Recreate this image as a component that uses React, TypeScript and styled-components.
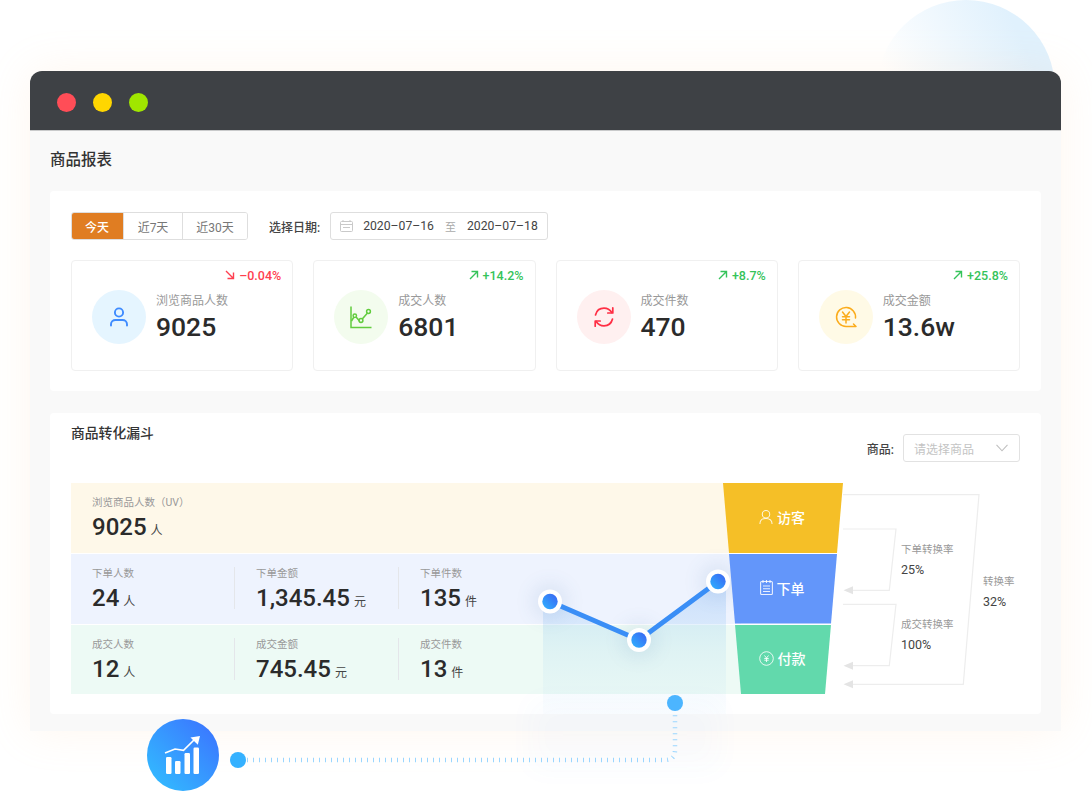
import React from 'react';
import styled, { createGlobalStyle } from 'styled-components';

const GlobalStyle = createGlobalStyle`
  html, body {
    margin: 0;
    padding: 0;
    background: #fff;
  }
  * {
    box-sizing: border-box;
  }
`;

const Page = styled.div`
  position: relative;
  width: 1092px;
  height: 792px;
  overflow: hidden;
  padding: 71px 31px 0 30px;
  background: #fff;
  font-family: Roboto, 'Noto Sans CJK SC', sans-serif;
  color: #2b2b2b;
`;

const DecorCircle = styled.div`
  position: absolute;
  left: 877px;
  top: 0;
  width: 178px;
  height: 178px;
  border-radius: 50%;
  background: linear-gradient(65deg, rgba(224, 241, 254, 0) 22%, #e0f1fd 80%);
`;

const Window = styled.div`
  position: relative;
  height: 660px;
  background: #f9f9f9;
  border-radius: 12px 12px 0 0;
  box-shadow: 0 0 44px rgba(255, 196, 150, 0.16);
`;

const TitleBar = styled.div`
  display: flex;
  align-items: center;
  gap: 17px;
  height: 60px;
  padding: 3px 0 0 27px;
  background: #3e4145;
  border-radius: 12px 12px 0 0;
  border-bottom: 1px solid #c9cacb;
`;

const Light = styled.span<{ $color: string }>`
  width: 19px;
  height: 19px;
  border-radius: 50%;
  background: ${(p) => p.$color};
`;

const Content = styled.div`
  padding: 0 20px;
`;

const PageTitle = styled.h1`
  margin: 0;
  height: 60px;
  padding-top: 18px;
  font-size: 15.5px;
  line-height: 22px;
  font-weight: 500;
  color: #333;
`;

const Panel = styled.section`
  background: #fff;
  border-radius: 4px;
  padding: 21px;
  height: 200px;
`;

const FunnelPanel = styled(Panel)`
  position: relative;
  margin-top: 22px;
  height: 301px;
  padding-top: 0;
`;

const Toolbar = styled.div`
  display: flex;
  align-items: center;
  height: 28px;
`;

const Segment = styled.div`
  display: flex;
  height: 28px;
  border: 1px solid #dedede;
  border-radius: 3px;
  overflow: hidden;
`;

const SegmentItem = styled.button<{ $active?: boolean; $w: number }>`
  width: ${(p) => p.$w}px;
  margin: ${(p) => (p.$active ? '-1px 0 -1px -1px' : '0')};
  padding: 0;
  border: none;
  border-left: ${(p) => (p.$active ? 'none' : '1px solid #dedede')};
  background: ${(p) => (p.$active ? '#e07d22' : '#fff')};
  color: ${(p) => (p.$active ? '#fff' : '#777')};
  font-family: inherit;
  font-size: 12px;
  font-weight: ${(p) => (p.$active ? 500 : 400)};
`;

const FieldLabel = styled.span`
  margin-left: 21px;
  font-size: 12px;
  font-weight: 500;
  color: #444;
`;

const DatePicker = styled.div`
  display: flex;
  align-items: center;
  width: 218px;
  height: 28px;
  margin-left: 10px;
  padding-left: 9px;
  border: 1px solid #dedede;
  border-radius: 3px;
  font-size: 12.2px;
  color: #444;
  white-space: nowrap;
`;

const DateValue = styled.span``;

const DateSep = styled.span`
  margin: 0 11px;
  font-size: 11px;
  color: #aaa;
`;

const CalendarSvg = styled.svg`
  margin-right: 10px;
`;

const CardGrid = styled.div`
  display: grid;
  grid-template-columns: repeat(4, 1fr);
  gap: 20px;
  margin-top: 20px;
`;

const Card = styled.div`
  height: 111px;
  padding: 6px 11px 0 20px;
  border: 1px solid #f0f0f0;
  border-radius: 4px;
`;

const Trend = styled.div<{ $down?: boolean }>`
  display: flex;
  justify-content: flex-end;
  align-items: center;
  gap: 4px;
  height: 16px;
  font-size: 12.5px;
  font-weight: 500;
  color: ${(p) => (p.$down ? '#ff3f50' : '#35c35a')};
`;

const CardBody = styled.div`
  display: flex;
  align-items: center;
  gap: 10px;
  margin-top: 6px;
`;

const IconCircle = styled.div<{ $bg: string }>`
  display: flex;
  align-items: center;
  justify-content: center;
  width: 54px;
  height: 54px;
  border-radius: 50%;
  background: ${(p) => p.$bg};
`;

const StatText = styled.div`
  display: flex;
  flex-direction: column;
  padding-top: 4px;
`;

const StatLabel = styled.span`
  font-size: 12px;
  line-height: 16px;
  color: #999;
`;

const StatValue = styled.span`
  font-size: 26.5px;
  line-height: 36px;
  font-weight: 500;
  color: #2b2b2b;
`;

const FunnelHead = styled.div`
  display: flex;
  justify-content: space-between;
  height: 70px;
`;

const FunnelTitle = styled.h2`
  margin: 10px 0 0;
  font-size: 13.8px;
  line-height: 20px;
  font-weight: 500;
  color: #333;
`;

const SelectWrap = styled.div`
  display: flex;
  align-items: center;
  gap: 9px;
  height: 28px;
  margin-top: 21px;
  font-size: 12px;
  font-weight: 500;
  color: #444;
`;

const SelectBox = styled.div`
  display: flex;
  align-items: center;
  justify-content: space-between;
  width: 117px;
  height: 28px;
  padding: 0 11px 0 10px;
  border: 1px solid #e2e2e2;
  border-radius: 3px;
  font-weight: 400;
  color: #c4c4c4;
`;

const Rows = styled.div`
  position: relative;
  display: flex;
  flex-direction: column;
  width: 772px;
`;

const Row = styled.div<{ $sep?: boolean }>`
  display: grid;
  grid-template-columns: 652px 120px;
  height: ${(p) => (p.$sep ? 70.5 : 70)}px;
  padding-top: ${(p) => (p.$sep ? 1 : 0)}px;
`;

const RowFill = styled.div<{ $bg: string }>`
  display: flex;
  margin-right: -18px;
  background: ${(p) => p.$bg};
`;

const Cell = styled.div<{ $divider?: boolean }>`
  width: 164px;
  height: 42px;
  margin-top: 13px;
  padding-left: 21px;
  border-right: ${(p) => (p.$divider ? '1px solid #e4e6ea' : 'none')};
`;

const CellLabel = styled.div`
  font-size: 10.5px;
  line-height: 14px;
  color: #999;
`;

const CellValue = styled.div`
  font-size: 24px;
  line-height: 34px;
  font-weight: 500;
  color: #2b2b2b;
  white-space: nowrap;
`;

const Unit = styled.span`
  margin-left: 4px;
  font-size: 12px;
  font-weight: 400;
  color: #444;
`;

const FunnelSegment = styled.div<{ $bg: string; $inset: number }>`
  position: relative;
  z-index: 1;
  display: flex;
  align-items: center;
  justify-content: center;
  gap: 4px;
  padding: 0 2px 2px 0;
  background: ${(p) => p.$bg};
  clip-path: polygon(
    ${(p) => p.$inset}px 0,
    ${(p) => 120 - p.$inset}px 0,
    ${(p) => 114 - p.$inset}px 100%,
    ${(p) => p.$inset + 6}px 100%
  );
  font-size: 14px;
  font-weight: 500;
  color: #fff;
`;

const Rates = styled.div`
  position: absolute;
  left: 793px;
  top: 70px;
  width: 177px;
  height: 215px;
`;

const RateLines = styled.svg`
  position: absolute;
  left: 0;
  top: 0;
`;

const RateItem = styled.div<{ $col: number; $row: number; $offset?: number }>`
  position: relative;
  grid-column: ${(p) => p.$col};
  grid-row: ${(p) => p.$row};
  margin-top: ${(p) => p.$offset ?? 0}px;
`;

const RateGrid = styled.div`
  position: relative;
  display: grid;
  grid-template-columns: 82px 60px;
  grid-template-rows: 75px 75px;
  padding: 59px 0 0 58px;
`;

const RateLabel = styled.div`
  font-size: 10.5px;
  line-height: 16px;
  color: #999;
`;

const RateValue = styled.div`
  margin-top: 3px;
  font-size: 12.5px;
  line-height: 18px;
  color: #444;
`;

const Overlay = styled.svg`
  position: absolute;
  left: 0;
  top: 0;
  pointer-events: none;
`;

const Badge = styled.div`
  position: absolute;
  left: 147px;
  top: 719px;
  display: flex;
  align-items: center;
  justify-content: center;
  width: 72px;
  height: 72px;
  padding-left: 2px;
  border-radius: 50%;
  background: linear-gradient(225deg, #3c6fff 0%, #33b5ff 85%);
`;

const metrics = [
  { label: '浏览商品人数', value: '9025', trend: '–0.04%', down: true, bg: '#e5f5ff', icon: 'user' },
  { label: '成交人数', value: '6801', trend: '+14.2%', bg: '#f3fcee', icon: 'chart' },
  { label: '成交件数', value: '470', trend: '+8.7%', bg: '#fff0f0', icon: 'sync' },
  { label: '成交金额', value: '13.6w', trend: '+25.8%', bg: '#fffae6', icon: 'yen' },
];

const orderCells = [
  { label: '下单人数', value: '24', unit: '人' },
  { label: '下单金额', value: '1,345.45', unit: '元' },
  { label: '下单件数', value: '135', unit: '件' },
];

const dealCells = [
  { label: '成交人数', value: '12', unit: '人' },
  { label: '成交金额', value: '745.45', unit: '元' },
  { label: '成交件数', value: '13', unit: '件' },
];

const points = [
  [550, 601.5],
  [639, 640],
  [718, 581.5],
];

const MetricIcon = ({ name }: { name: string }) => {
  if (name === 'user') {
    return (
      <svg width="20" height="24" viewBox="0 0 20 24" fill="none" stroke="#3e8bff" strokeWidth="1.9" strokeLinecap="round">
        <circle cx="10" cy="7.5" r="4.1" />
        <path d="M2 20.5v-1.2c0-2.6 2-4.3 4.5-4.3h7c2.500 0 4.500 1.700 4.500 4.300v1.200" />
      </svg>
    );
  }
  if (name === 'chart') {
    return (
      <svg width="24" height="24" viewBox="0 0 24 24" fill="none" stroke="#62cc3e" strokeWidth="1.5">
        <path d="M2 1.500V22.500H22.500" />
        <path d="M2.500 16L5.800 10.500L11 16.500L18.500 8" />
        <circle cx="5.800" cy="10.800" r="1.700" fill="#f3fcee" />
        <circle cx="12" cy="15.500" r="1.900" fill="#f3fcee" />
        <circle cx="19.500" cy="6.500" r="1.900" fill="#f3fcee" />
      </svg>
    );
  }
  if (name === 'sync') {
    return (
      <svg width="22" height="22" viewBox="0 0 22 22" fill="none" stroke="#ff2f45" strokeWidth="1.700" strokeLinecap="round" strokeLinejoin="round">
        <path d="M2.500 9C3.500 5 6.800 2.200 11 2.200c3.300 0 6 1.500 7.800 4.300" />
        <path d="M19.800 1.800v5.200h-5" />
        <path d="M19.500 13C18.500 17 15.200 19.800 11 19.800c-3.300 0-6-1.500-7.800-4.300" />
        <path d="M2.200 20.200V15h5" />
      </svg>
    );
  }
  return (
    <svg width="22" height="22" viewBox="0 0 22 22" fill="none" stroke="#fbac1c" strokeWidth="1.500" strokeLinecap="round" strokeLinejoin="round">
      <path d="M20.500 12A9.500 9.500 0 1 0 11 20.500h10l-2.500-2.500" />
      <path d="M7.500 6l3.500 4.500L14.500 6M7.500 10.800h7M7.500 13.800h7M11 10.500V17" />
    </svg>
  );
};

const TrendArrow = ({ down }: { down?: boolean }) => (
  <svg width="10" height="10" viewBox="0 0 10 10" fill="none" stroke="currentColor" strokeWidth="1.400">
    {down ? <path d="M1 1l7.500 7.500M8.500 2.500v6h-6" /> : <path d="M1 9l7.500-7.500M2.500 1.500h6v6" />}
  </svg>
);

const CalendarIcon = () => (
  <CalendarSvg width="13" height="12" viewBox="0 0 13 12" fill="none" stroke="#c9c9c9" strokeWidth="1">
    <rect x="0.500" y="1.500" width="12" height="10" rx="1" />
    <path d="M0.500 4.500h12M3 0v2M10 0v2" />
    <path d="M3 7.500h7" />
  </CalendarSvg>
);

const Chevron = () => (
  <svg width="12" height="8" viewBox="0 0 12 8" fill="none" stroke="#c0c0c0" strokeWidth="1.100">
    <path d="M0.500 0.800L6 6.800L11.500 0.800" />
  </svg>
);

const VisitorIcon = () => (
  <svg width="14" height="16" viewBox="0 0 15 16" fill="none" stroke="rgba(255,255,255,0.85)" strokeWidth="1.100">
    <circle cx="7.500" cy="5" r="4" />
    <path d="M1 15.500c0-3.500 2.500-6 6.500-6s6.500 2.500 6.500 6" />
  </svg>
);

const OrderIcon = () => (
  <svg width="13" height="15" viewBox="0 0 13 15" fill="none" stroke="rgba(255,255,255,0.85)" strokeWidth="1.100">
    <rect x="0.600" y="1.500" width="11.800" height="13" rx="1" />
    <path d="M3 0v3M6.500 0v3M10 0v3M3 6h7M3 8.800h7M3 11.500h7" />
  </svg>
);

const PayIcon = () => (
  <svg width="15" height="15" viewBox="0 0 15 15" fill="none" stroke="rgba(255,255,255,0.85)" strokeWidth="1">
    <circle cx="7.500" cy="7.500" r="6.800" />
    <path d="M5.500 4.500l2 2.500 2-2.500M5.300 7.500h4.400M5.300 9.200h4.400M7.500 7v4" />
  </svg>
);

const BadgeIcon = () => (
  <svg width="40" height="42" viewBox="0 0 40 42" fill="#fff">
    <rect x="2" y="23" width="5.500" height="17" rx="1.200" />
    <rect x="11" y="27" width="5.500" height="13" rx="1.200" />
    <rect x="20.500" y="19" width="5.500" height="21" rx="1.200" />
    <rect x="29.500" y="13.500" width="5.500" height="26.500" rx="1.200" />
    <path d="M1 19l10-4 8.500 1.300L31 5" fill="none" stroke="#fff" strokeWidth="1.600" />
    <path d="M26.500 3.500L36 2l-2.200 8.800z" />
  </svg>
);

const RateBrackets = () => (
  <RateLines width="177" height="215" viewBox="843 483 177 215" fill="none" stroke="#ededed" strokeWidth="1.200">
    <path d="M843 494.700H979L963.300 684.300H853" />
    <path d="M837 529H896L889.300 590.300H853" />
    <path d="M831 604.300H896L889.300 665.700H853" />
    <path d="M843.500 590.300L853 586.300V594.300z" fill="#e4e4e4" stroke="none" />
    <path d="M843.500 665.700L853 661.700V669.700z" fill="#e4e4e4" stroke="none" />
    <path d="M843.500 684.300L853 680.300V688.300z" fill="#e4e4e4" stroke="none" />
  </RateLines>
);

const ChartOverlay = () => (
  <Overlay width="1092" height="792" viewBox="0 0 1092 792" fill="none">
    <defs>
      <linearGradient id="area" x1="0" y1="0" x2="0" y2="1">
        <stop offset="0" stopColor="#3d8ef6" stopOpacity="0.22" />
        <stop offset="0.55" stopColor="#48a6e6" stopOpacity="0.085" />
        <stop offset="1" stopColor="#5ab0f0" stopOpacity="0.02" />
      </linearGradient>
      <linearGradient id="dot" x1="1" y1="0" x2="0" y2="1">
        <stop offset="0" stopColor="#3a62f2" />
        <stop offset="1" stopColor="#2fb4ff" />
      </linearGradient>
      <filter id="haze" x="-80%" y="-80%" width="260%" height="260%">
        <feGaussianBlur stdDeviation="11" />
      </filter>
      <filter id="wide" x="-30%" y="-30%" width="160%" height="160%">
        <feGaussianBlur stdDeviation="14" />
      </filter>
    </defs>
    <rect x="530" y="700" width="190" height="70" fill="#3d8ef6" opacity="0.025" filter="url(#wide)" />
    <path d="M543 598.500L550 601.500L639 640L718 581.500L726 575.500V714H543Z" fill="url(#area)" />
    {points.map(([cx, cy]) => (
      <circle key={cx} cx={cx} cy={cy} r="15" fill="#2d5f9e" opacity="0.15" filter="url(#haze)" />
    ))}
    <path d="M550 601.500L639 640L718 581.500" stroke="#3a8ef6" strokeWidth="5" />
    {points.map(([cx, cy]) => (
      <g key={cx}>
        <circle cx={cx} cy={cy} r="12" fill="#fff" />
        <circle cx={cx} cy={cy} r="7.700" fill="url(#dot)" />
      </g>
    ))}
    <path d="M247 760H665Q675 760 675 750V712" stroke="#9ad6ff" strokeWidth="4.500" strokeDasharray="1 5" />
    <circle cx="675" cy="703" r="8" fill="#4cb5ff" />
    <circle cx="238" cy="760" r="8" fill="#35b1ff" />
  </Overlay>
);

const App: React.FC = () => (
  <Page>
    <GlobalStyle />
    <DecorCircle />
    <Window>
      <TitleBar>
        <Light $color="#ff4d57" />
        <Light $color="#ffd600" />
        <Light $color="#a0e600" />
      </TitleBar>
      <Content>
        <PageTitle>商品报表</PageTitle>
        <Panel>
          <Toolbar>
            <Segment>
              <SegmentItem $active $w={52}>今天</SegmentItem>
              <SegmentItem $w={59}>近7天</SegmentItem>
              <SegmentItem $w={65}>近30天</SegmentItem>
            </Segment>
            <FieldLabel>选择日期:</FieldLabel>
            <DatePicker>
              <CalendarIcon />
              <DateValue>2020–07–16</DateValue>
              <DateSep>至</DateSep>
              <DateValue>2020–07–18</DateValue>
            </DatePicker>
          </Toolbar>
          <CardGrid>
            {metrics.map((m) => (
              <Card key={m.label}>
                <Trend $down={m.down}>
                  <TrendArrow down={m.down} />
                  {m.trend}
                </Trend>
                <CardBody>
                  <IconCircle $bg={m.bg}>
                    <MetricIcon name={m.icon} />
                  </IconCircle>
                  <StatText>
                    <StatLabel>{m.label}</StatLabel>
                    <StatValue>{m.value}</StatValue>
                  </StatText>
                </CardBody>
              </Card>
            ))}
          </CardGrid>
        </Panel>
        <FunnelPanel>
          <FunnelHead>
            <FunnelTitle>商品转化漏斗</FunnelTitle>
            <SelectWrap>
              商品:
              <SelectBox>
                请选择商品
                <Chevron />
              </SelectBox>
            </SelectWrap>
          </FunnelHead>
          <Rows>
            <Row>
              <RowFill $bg="#fef8e9">
                <Cell>
                  <CellLabel>浏览商品人数（UV）</CellLabel>
                  <CellValue>9025<Unit>人</Unit></CellValue>
                </Cell>
              </RowFill>
              <FunnelSegment $bg="#f5bf27" $inset={0}>
                <VisitorIcon />
                访客
              </FunnelSegment>
            </Row>
            <Row $sep>
              <RowFill $bg="#eef3fe">
                {orderCells.map((c, i) => (
                  <Cell key={c.label} $divider={i < 2}>
                    <CellLabel>{c.label}</CellLabel>
                    <CellValue>{c.value}<Unit>{c.unit}</Unit></CellValue>
                  </Cell>
                ))}
              </RowFill>
              <FunnelSegment $bg="#6396fa" $inset={6}>
                <OrderIcon />
                下单
              </FunnelSegment>
            </Row>
            <Row $sep>
              <RowFill $bg="#edfaf5">
                {dealCells.map((c, i) => (
                  <Cell key={c.label} $divider={i < 2}>
                    <CellLabel>{c.label}</CellLabel>
                    <CellValue>{c.value}<Unit>{c.unit}</Unit></CellValue>
                  </Cell>
                ))}
              </RowFill>
              <FunnelSegment $bg="#62d9ac" $inset={12}>
                <PayIcon />
                付款
              </FunnelSegment>
            </Row>
          </Rows>
          <Rates>
            <RateBrackets />
            <RateGrid>
              <RateItem $col={1} $row={1}>
                <RateLabel>下单转换率</RateLabel>
                <RateValue>25%</RateValue>
              </RateItem>
              <RateItem $col={1} $row={2}>
                <RateLabel>成交转换率</RateLabel>
                <RateValue>100%</RateValue>
              </RateItem>
              <RateItem $col={2} $row={1} $offset={32}>
                <RateLabel>转换率</RateLabel>
                <RateValue>32%</RateValue>
              </RateItem>
            </RateGrid>
          </Rates>
        </FunnelPanel>
      </Content>
    </Window>
    <ChartOverlay />
    <Badge>
      <BadgeIcon />
    </Badge>
  </Page>
);

export default App;
